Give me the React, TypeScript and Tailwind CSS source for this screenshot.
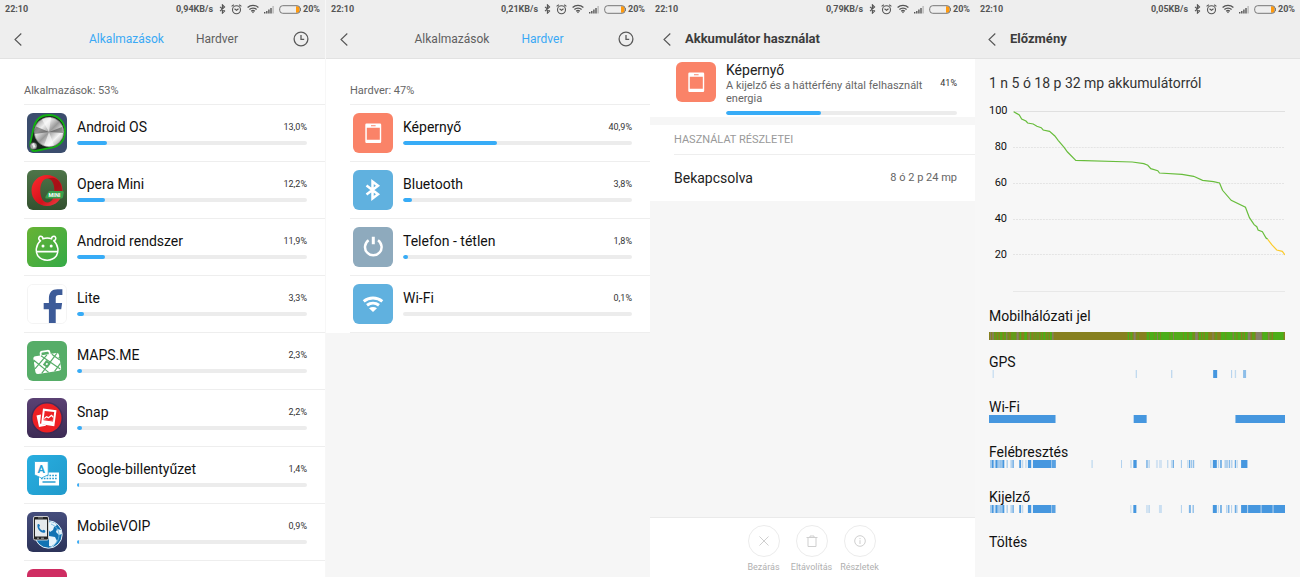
import React from "react";

type Range = [number, number, number?];

/* ---------- status bar ---------- */

function StatusBar({ speed }: { speed: string }) {
  return (
    <div className="flex h-[18px] items-center px-[5px] text-[9px] leading-3 font-bold text-[#555]">
      <span>22:10</span>
      <span className="ml-auto">{speed}</span>
      <svg className="ml-[6px] h-[10px] w-[7px]" viewBox="0 0 7 10" fill="none" stroke="currentColor" strokeWidth="1.1" aria-hidden="true">
        <path d="M1 2.8 5.6 7 3.4 9.2V.8L5.6 3 1 7.2" />
      </svg>
      <svg className="ml-[5px] h-[11px] w-[11px]" viewBox="0 0 11 11" fill="none" stroke="currentColor" aria-hidden="true">
        <circle cx="5.5" cy="5.8" r="4" strokeWidth="1.1" />
        <path d="M.6 2.4 2.8.8M10.4 2.4 8.2.8M3.5 4.7l2 1.6 2-1.6" strokeWidth="1.1" />
      </svg>
      <svg className="ml-[5px] h-[10px] w-[12px]" viewBox="0 0 12 10" fill="none" stroke="currentColor" strokeWidth="1.3" aria-hidden="true">
        <path d="M.6 3.5C3.6.7 8.4.7 11.4 3.5M2.4 5.5c2-1.9 5.2-1.9 7.2 0M4.2 7.3c1-1 2.6-1 3.6 0" />
        <path d="M4.7 7.7h2.6L6 9.3z" fill="currentColor" stroke="none" />
      </svg>
      <svg className="ml-[5px] h-[9px] w-[10px]" viewBox="0 0 10 9" fill="currentColor" aria-hidden="true">
        <path d="M0 7h1.4v1.5H0zM2.1 6h1.4v2.5H2.1zM4.2 4.6h1.4v3.9H4.2zM6.3 3h1.4v5.5H6.3z" />
        <path d="M8.4 1h1.4v7.5H8.4z" opacity=".35" />
      </svg>
      <svg className="ml-[5px] h-[9px] w-[22px]" viewBox="0 0 22 9" aria-hidden="true">
        <path d="M17 1.2h1.5a2 2 0 0 1 2 2v2.6a2 2 0 0 1-2 2H17z" fill="#ff9a0e" />
        <rect x=".7" y=".7" width="20.4" height="7.6" rx="3" fill="none" stroke="#777" strokeWidth="1" />
        <path d="M21.6 3v3" stroke="#777" />
      </svg>
      <span className="ml-[2px]">20%</span>
    </div>
  );
}

function BackButton() {
  return (
    <button type="button" aria-label="Vissza" className="flex h-6 w-4 shrink-0 items-center justify-center text-[#555]">
      <svg className="h-[13px] w-2" viewBox="0 0 8 13" fill="none" stroke="currentColor" strokeWidth="1.1" aria-hidden="true">
        <path d="M7.3.5 1 6.5l6.300 6" />
      </svg>
    </button>
  );
}

function TabHeader({ speed, active }: { speed: string; active: number }) {
  const on = "text-[#3aa9f5]";
  const off = "text-[#5f5f5f]";
  return (
    <header className="h-[59px] shrink-0 border-b border-[#e2e2e2] bg-[#eeeeee]">
      <StatusBar speed={speed} />
      <div className="flex h-10 items-center pt-[2px] pr-4 pl-[10px]">
        <BackButton />
        <nav className="flex flex-1 items-center justify-center gap-8 pl-2 text-[12px] leading-4">
          <a href="#apps" className={active === 0 ? on : off}>Alkalmazások</a>
          <a href="#hardware" className={active === 1 ? on : off}>Hardver</a>
        </nav>
        <button type="button" aria-label="Előzmény" className="text-[#5a5a5a]">
          <svg className="h-4 w-4" viewBox="0 0 16 16" fill="none" stroke="currentColor" strokeWidth="1.3" aria-hidden="true">
            <circle cx="8" cy="8" r="6.9" />
            <path d="M8 4v4.3h3.2" />
          </svg>
        </button>
      </div>
    </header>
  );
}

function TitleHeader({ speed, title }: { speed: string; title: string }) {
  return (
    <header className="h-[59px] shrink-0 border-b border-[#e2e2e2] bg-[#eeeeee]">
      <StatusBar speed={speed} />
      <div className="flex h-10 items-center gap-[10px] pt-[2px] pl-[9px]">
        <BackButton />
        <h1 className="text-[13px] leading-4 font-bold text-[#3c3c3c]">{title}</h1>
      </div>
    </header>
  );
}

/* ---------- app icons ---------- */

const tile = "h-10 w-10 shrink-0 rounded-[6px]";

function AndroidOsIcon() {
  return (
    <svg className={tile} viewBox="0 0 40 40" aria-hidden="true">
      <defs>
        <linearGradient id="knob" x1="0" y1="0" x2="1" y2="1">
          <stop offset="0" stopColor="#777" />
          <stop offset=".3" stopColor="#eee" />
          <stop offset=".5" stopColor="#9a9a9a" />
          <stop offset=".72" stopColor="#f4f4f4" />
          <stop offset="1" stopColor="#777" />
        </linearGradient>
      </defs>
      <rect width="40" height="40" fill="#3b4d6d" />
      <path d="M3.500 29 6.800 14C9 6 15 2 22 2c9 0 16 7 16 16 0 8-4 14-12 16.500L8 38c-3 .6-5.500-3-4.500-9z" fill="#17251c" stroke="#12b012" strokeWidth="1.800" />
      <circle cx="22" cy="19" r="14.800" fill="url(#knob)" stroke="#666" strokeWidth=".6" />
      <path d="M22 19 9 13.500A14 14 0 0 0 7.500 21zM22 19l13-5a14 14 0 0 1 1 6z" fill="#333" opacity=".5" />
      <path d="M22 19 15 6.500a14 14 0 0 1 9-2.200zM22 19l-5 13.500a14 14 0 0 0 10 0z" fill="#fff" opacity=".6" />
      <circle cx="6.500" cy="33" r="3.600" fill="#a2a6a4" stroke="#333" strokeWidth=".5" />
      <path d="m5 31 2-1 1.500 4-2 1z" fill="#eee" />
    </svg>
  );
}

function OperaIcon() {
  return (
    <svg className={tile} viewBox="0 0 40 40" aria-hidden="true">
      <defs>
        <linearGradient id="operaBg" x1="0" y1="0" x2="0" y2="1">
          <stop offset="0" stopColor="#4e7549" />
          <stop offset="1" stopColor="#33512f" />
        </linearGradient>
        <linearGradient id="operaO" x1="0" y1="0" x2="1" y2="1">
          <stop offset="0" stopColor="#ff2b2e" />
          <stop offset=".6" stopColor="#d3121c" />
          <stop offset="1" stopColor="#f4474a" />
        </linearGradient>
      </defs>
      <rect width="40" height="40" fill="url(#operaBg)" />
      <path fillRule="evenodd" d="M20 5c8.600 0 15.500 6.700 15.500 15.500S28.600 36 20 36 4.500 29.300 4.500 20.500 11.400 5 20 5zm.5 3.500c-4.500 0-7.200 5-7.200 12s2.700 12 7.200 12 7-5 7-12-2.500-12-7-12z" fill="url(#operaO)" />
      <path d="M20.500 8.500C30 5 35 13 35 21h-7.500c0-7-2.500-12.500-7-12.500z" fill="#8d1013" opacity=".65" />
      <path d="M21 22.500q.4-1.500 2-1.500h12.500q1.500 0 1.300 1.500L36 27q-.3 1.600-2 1.600H19.500q-1.500 0-1.200-1.500z" fill="#39a14b" />
      <text x="27.500" y="27" textAnchor="middle" fontSize="5.500" fontWeight="700" fill="#fff" fontFamily="Roboto, sans-serif">MINI</text>
    </svg>
  );
}

function AndroidSystemIcon() {
  return (
    <svg className={tile} viewBox="0 0 40 40" aria-hidden="true">
      <defs>
        <linearGradient id="androidBg" x1="0" y1="0" x2="1" y2="1">
          <stop offset="0" stopColor="#68b334" />
          <stop offset="1" stopColor="#34aa47" />
        </linearGradient>
      </defs>
      <rect width="40" height="40" fill="url(#androidBg)" />
      <g fill="none" stroke="#fff" strokeWidth="1.500">
        <path d="M14.200 13.500c-3 .5-3.300-4-.7-4.200 1.600-.1 2.300 1 2.500 2.500 2.500-1 6-1 8.500 0 .2-1.500 1-2.600 2.500-2.500 2.600.2 2.300 4.700-.7 4.200" />
        <path d="M13.700 13.500C8.500 18 8.300 25 11 29c4.500 5.500 14 5.500 18.200 0 2.700-4 2.500-11-2.700-15.500" />
        <path d="M9.500 24.600h21" strokeWidth="1.800" />
      </g>
      <circle cx="16" cy="19" r="1.500" fill="#fff" />
      <circle cx="24.200" cy="19" r="1.500" fill="#fff" />
    </svg>
  );
}

function LiteIcon() {
  return (
    <svg className={tile + " border border-[#f4f4f4]"} viewBox="0 0 40 40" aria-hidden="true">
      <rect width="40" height="40" fill="#fff" />
      <path d="M22 40.500V25.500h-5.500v-6.600H22V14c0-6 3.200-9.500 9-9.500h5.200v6h-3.700c-2.500 0-3.300 1.100-3.300 3.300v5.100h6.700l-.9 6.600h-5.800v15z" fill="#3d5b98" />
    </svg>
  );
}

function MapsIcon() {
  return (
    <svg className={tile} viewBox="0 0 40 40" aria-hidden="true">
      <rect width="40" height="40" fill="#56ad68" />
      <g transform="rotate(-9 20 21)">
        <path d="M15 14v-2.200Q15 10 17 10h5q2 0 2 1.800V14" fill="none" stroke="#fff" strokeWidth="1.800" />
        <path d="M9.500 13.500h21q2.500 0 2.500 2.500v1.500l-1.200 1 1.200 1V29q0 2.500-2.500 2.500h-21Q7 31.500 7 29v-9.500l1.200-1-1.200-1V16q0-2.500 2.500-2.500z" fill="#fff" />
        <path d="m7 26 14-12M13 31.500 31 14M26 31.500l7-7M7 17l13 14.500M15 14l17 16M26 14l7 7" stroke="#56ad68" strokeWidth="1.200" />
        <path d="m19.500 19 4 4-4 4-4-4z" fill="#56ad68" />
        <path d="m19.500 21.700 1.300 1.300-1.300 1.300-1.300-1.300z" fill="#fff" />
      </g>
    </svg>
  );
}

function SnapIcon() {
  return (
    <svg className={tile} viewBox="0 0 40 40" aria-hidden="true">
      <defs>
        <linearGradient id="snapBg" x1="0" y1="0" x2="0" y2="1">
          <stop offset="0" stopColor="#5a4173" />
          <stop offset="1" stopColor="#3c2b54" />
        </linearGradient>
      </defs>
      <rect width="40" height="40" fill="url(#snapBg)" />
      <circle cx="20" cy="20" r="16" fill="#3a2550" opacity=".6" />
      <circle cx="20" cy="20" r="14.500" fill="#ed2024" />
      <path d="m9.500 17.500 4.500-1-1 9 6 1.500-.3.800-6.700 1.200z" fill="#fff" />
      <path fillRule="evenodd" d="m16 10.500 13.500 1.800-2.200 16-13.200-2zm1.700 2.400-1.200 9.300 9.500 1.300 1.200-9.400z" fill="#fff" />
      <path d="m17.500 19.500 2-1.500 2 1 3-2.500 2 2-.6 4-8.900-1.100z" fill="#fff" />
      <path d="m17.500 21 2-1.500 2 1 3-2.200 1.600 1.700-.4 2.600-8.500-1z" fill="#ed2024" />
    </svg>
  );
}

function KeyboardIcon() {
  return (
    <svg className={tile} viewBox="0 0 40 40" aria-hidden="true">
      <defs>
        <linearGradient id="kbBg" x1="0" y1="0" x2="1" y2="1">
          <stop offset="0" stopColor="#28aee0" />
          <stop offset="1" stopColor="#219acb" />
        </linearGradient>
      </defs>
      <rect width="40" height="40" fill="url(#kbBg)" />
      <path d="M12 17.500h20v13H12z" fill="#fff" />
      <path d="M14 20.500h16M14 23.500h16" stroke="#2a9fd2" strokeWidth="1.500" strokeDasharray="1.700 1.100" />
      <path d="M15.500 27h13" stroke="#2a9fd2" strokeWidth="1.600" />
      <path d="M7.500 6.500h13.700v13.300L14.400 23l-6.900-3.200z" fill="#fff" stroke="#2aa6d9" strokeWidth=".8" />
      <text x="14.300" y="18" textAnchor="middle" fontSize="11" fontWeight="700" fill="#279fd4" fontFamily="Roboto, sans-serif">A</text>
    </svg>
  );
}

function VoipIcon() {
  return (
    <svg className={tile} viewBox="0 0 40 40" aria-hidden="true">
      <defs>
        <linearGradient id="voipBg" x1="0" y1="0" x2="0" y2="1">
          <stop offset="0" stopColor="#454d7c" />
          <stop offset="1" stopColor="#2c3359" />
        </linearGradient>
      </defs>
      <rect width="40" height="40" fill="url(#voipBg)" />
      <circle cx="21.500" cy="22.500" r="13.700" fill="#1273b3" stroke="#e9f3fa" strokeWidth="1" />
      <path d="M20 11c4-2 8-.5 10 2l-3 2-1 3-3 2-2-3zM22 24l6 1 2 4-4 6-4-1zM30 17l4 1 1 4-3 1-3-3z" fill="#e6f3fa" />
      <path d="M24 12c5 2 8 6 8 11s-3 9-7 11" fill="none" stroke="#70b8df" strokeWidth=".9" />
      <rect x="6.500" y="4.500" width="15" height="23.500" rx="1.500" fill="#222" stroke="#ddd" strokeWidth=".9" />
      <rect x="8" y="7.500" width="12" height="17" fill="#e5e9ec" />
      <path d="M11 5.900h5" stroke="#999" strokeWidth=".8" />
      <path d="M10 26.200h2m2 0h3" stroke="#bbb" strokeWidth=".9" />
      <path d="M10.500 12.500c.5-1 2-.8 2.500 1l-.8 1.500c.5 2 1.800 3 3.300 3.500l1.300-.8c1.500.4 2 1.500 1.200 2.800-4 1.500-8.500-4-7.500-8z" fill="#1877bb" />
    </svg>
  );
}

function PinkIcon() {
  return (
    <svg className={tile} viewBox="0 0 40 40" aria-hidden="true">
      <rect width="40" height="40" fill="#cf2d62" />
    </svg>
  );
}

function ScreenIcon() {
  return (
    <svg className={tile} viewBox="0 0 40 40" aria-hidden="true">
      <rect width="40" height="40" fill="#fa8368" />
      <path fillRule="evenodd" d="M13.500 10.500h13.500q1.200 0 1.200 1.200v17q0 1.200-1.200 1.200h-13.500q-1.200 0-1.200-1.200v-17q0-1.200 1.200-1.200zm.3 4.200v12h13v-12zm4.200-2.500v1h4.600v-1z" fill="#fff" />
    </svg>
  );
}

function BluetoothIcon() {
  return (
    <svg className={tile} viewBox="0 0 40 40" aria-hidden="true">
      <rect width="40" height="40" fill="#60b1df" />
      <path d="m13.500 15.500 11.500 8.700-5.500 4.300v-17l5.500 4.300-11.500 8.700" fill="none" stroke="#fff" strokeWidth="2.500" />
    </svg>
  );
}

function PowerIcon() {
  return (
    <svg className={tile} viewBox="0 0 40 40" aria-hidden="true">
      <rect width="40" height="40" fill="#8eaabd" />
      <path d="M15.600 13.200a8.300 8.300 0 1 0 9.400 0" fill="none" stroke="#fff" strokeWidth="2.500" />
      <path d="M20.300 9.800v7.400" stroke="#fff" strokeWidth="3" />
    </svg>
  );
}

function WifiIcon() {
  return (
    <svg className={tile} viewBox="0 0 40 40" aria-hidden="true">
      <rect width="40" height="40" fill="#60b1df" />
      <path d="M10.700 17.300c5.300-4.300 13.300-4.300 18.600 0M14 21.300c3.500-2.700 8.500-2.700 12 0" fill="none" stroke="#fff" strokeWidth="3" />
      <path d="M16 24.200c2.500-1.500 5.500-1.500 8 0L20 28z" fill="#fff" />
    </svg>
  );
}

/* ---------- usage lists ---------- */

function Meter({ value, label }: { value: number; label: string }) {
  return (
    <div role="progressbar" aria-label={label} aria-valuenow={value} className="h-1 overflow-hidden rounded-full bg-[#ececec]">
      <div className="h-1 rounded-full bg-[#37acf7]" style={{ width: `${value}%` }} />
    </div>
  );
}

type Item = { name: string; percent: string; bar: number; icon: React.ReactNode };

const apps: Item[] = [
  { name: "Android OS", percent: "13,0%", bar: 13, icon: <AndroidOsIcon /> },
  { name: "Opera Mini", percent: "12,2%", bar: 12, icon: <OperaIcon /> },
  { name: "Android rendszer", percent: "11,9%", bar: 12, icon: <AndroidSystemIcon /> },
  { name: "Lite", percent: "3,3%", bar: 3, icon: <LiteIcon /> },
  { name: "MAPS.ME", percent: "2,3%", bar: 2, icon: <MapsIcon /> },
  { name: "Snap", percent: "2,2%", bar: 2, icon: <SnapIcon /> },
  { name: "Google-billentyűzet", percent: "1,4%", bar: 1, icon: <KeyboardIcon /> },
  { name: "MobileVOIP", percent: "0,9%", bar: 1, icon: <VoipIcon /> },
  { name: "", percent: "", bar: 0, icon: <PinkIcon /> },
];

const hardware: Item[] = [
  { name: "Képernyő", percent: "40,9%", bar: 41, icon: <ScreenIcon /> },
  { name: "Bluetooth", percent: "3,8%", bar: 4, icon: <BluetoothIcon /> },
  { name: "Telefon - tétlen", percent: "1,8%", bar: 2, icon: <PowerIcon /> },
  { name: "Wi-Fi", percent: "0,1%", bar: 0, icon: <WifiIcon /> },
];

function UsageList({ title, items }: { title: string; items: Item[] }) {
  return (
    <section className="bg-white pl-6">
      <h2 className="pt-6 pb-[5px] text-[11px] leading-4 text-[#666]">{title}</h2>
      <ul className="border-b border-[#eeeeee]">
        {items.map((item, i) => (
          <li key={i} className="flex h-[57px] items-center gap-[10px] border-t border-[#eeeeee] pr-[18px] pl-[3px]">
            {item.icon}
            {item.name && (
              <div className="flex-1 pb-[2px]">
                <div className="mb-[6px] flex items-center justify-between">
                  <span className="text-[14px] leading-4 text-[#111]">{item.name}</span>
                  <span className="text-[9px] leading-4 text-[#333]">{item.percent}</span>
                </div>
                <Meter value={item.bar} label={item.name} />
              </div>
            )}
          </li>
        ))}
      </ul>
    </section>
  );
}

/* ---------- battery detail ---------- */

function ActionButton({ label, children }: { label: string; children: React.ReactNode }) {
  return (
    <button type="button" disabled className="flex w-12 flex-col items-center gap-1 text-[9px] leading-3 text-[#b0b0b0]">
      <span className="flex h-8 w-8 items-center justify-center rounded-full border border-[#ececec] text-[#cfcfcf]">
        <svg className="h-3 w-3" viewBox="0 0 12 12" fill="none" stroke="currentColor" strokeWidth="1" aria-hidden="true">
          {children}
        </svg>
      </span>
      {label}
    </button>
  );
}

function BatteryDetail() {
  return (
    <>
      <section className="flex gap-[10px] bg-white pt-[3px] pr-[18px] pb-[2px] pl-[26px]">
        <ScreenIcon />
        <div className="flex-1">
          <div className="flex justify-between">
            <div className="max-w-[205px]">
              <h2 className="text-[14px] leading-4 text-[#222]">Képernyő</h2>
              <p className="pt-px text-[11px] leading-[13px] text-[#666]">A kijelző és a háttérfény által felhasznált energia</p>
            </div>
            <span className="pt-[13px] text-[9px] leading-4 text-[#333]">41%</span>
          </div>
          <div className="pt-[6px]">
            <Meter value={41} label="Képernyő" />
          </div>
        </div>
      </section>
      <section className="mt-2 bg-white pl-6">
        <h2 className="border-b border-[#eeeeee] pt-[7px] pb-[6px] text-[11px] leading-4 text-[#999]">HASZNÁLAT RÉSZLETEI</h2>
        <div className="flex h-[46px] items-center justify-between pr-[18px]">
          <span className="text-[14px] leading-4 text-[#222]">Bekapcsolva</span>
          <span className="text-[11px] leading-4 text-[#666]">8 ó 2 p 24 mp</span>
        </div>
      </section>
      <footer className="mt-auto flex justify-center border-t border-[#eaeaea] bg-white pt-[7px] pr-[2px] pb-[4px]">
        <ActionButton label="Bezárás">
          <path d="m1.500 1.500 9 9M10.500 1.500l-9 9" />
        </ActionButton>
        <ActionButton label="Eltávolítás">
          <path d="M.5 2.500h11M2 2.500v9h8v-9M4 2.500V1h4v1.500" />
        </ActionButton>
        <ActionButton label="Részletek">
          <circle cx="6" cy="6" r="5.300" />
          <path d="M6 5.200V9M6 3v1.200" />
        </ActionButton>
      </footer>
    </>
  );
}

/* ---------- history ---------- */

function Track({ ranges, color = "#4697df" }: { ranges: Range[]; color?: string }) {
  return (
    <svg className="block h-2 w-full" viewBox="0 0 890 8" preserveAspectRatio="none" aria-hidden="true">
      {ranges.map(([x, w, o], i) => (
        <rect key={i} x={x} y="0" width={w} height="8" fill={color} opacity={o ?? 1} />
      ))}
    </svg>
  );
}

const signalGreen: Range[] = [
  [16, 3], [24, 4, 0.7], [33, 8, 0.8], [46, 4], [56, 3, 0.6], [66, 16, 0.6], [92, 5], [106, 8], [124, 3], [134, 5, 0.6],
  [142, 9, 0.5], [155, 5, 0.8], [163, 7], [174, 5, 0.7], [183, 6], [417, 4], [425, 6, 0.8], [447, 3, 0.6], [474, 8], [484, 12],
  [498, 8], [509, 6], [517, 26], [545, 8], [556, 28, 0.9], [586, 10], [600, 12], [615, 4, 0.6], [631, 6], [640, 5, 0.8],
  [649, 10, 0.8], [681, 5, 0.7], [697, 14], [713, 20], [736, 8, 0.9], [747, 10], [762, 4], [770, 8], [791, 8, 0.7],
  [822, 16], [844, 6, 0.7], [854, 32],
];
const signalGrey: Range[] = [
  [3, 3, 0.8], [10, 4], [52, 3], [83, 6], [119, 3], [190, 4], [435, 6], [505, 2], [554, 2], [620, 8], [672, 3], [733, 2], [778, 8], [802, 18], [840, 3],
];
const gps: Range[] = [[11, 3, 0.35], [441, 4, 0.3], [548, 3, 0.4], [674, 12], [728, 3, 0.4], [739, 4, 0.3], [764, 9, 0.6]];
const wifi: Range[] = [[0, 200], [435, 39], [741, 149]];
const early: Range[] = [
  [4, 3, 0.7], [8, 6], [17, 4, 0.6], [21, 5], [28, 4, 0.7], [34, 4, 0.8], [40, 6], [53, 3, 0.6], [65, 3, 0.6], [70, 5, 0.7], [91, 5], [98, 5, 0.3],
];
const wake: Range[] = [
  ...early, [109, 4, 0.3], [117, 10], [132, 55], [188, 13, 0.9], [308, 4, 0.3], [397, 3, 0.4], [425, 4, 0.3], [434, 10], [473, 4, 0.8], [479, 5, 0.3],
  [502, 6, 0.2], [511, 9, 0.2], [536, 3, 0.4], [547, 3, 0.3], [552, 4, 0.8], [577, 3, 0.5], [596, 3, 0.3], [601, 4, 0.8], [607, 4, 0.5], [613, 4, 0.6],
  [665, 4, 0.3], [673, 12], [688, 4, 0.3], [695, 5, 0.8], [708, 12, 0.4], [722, 3, 0.7], [728, 4, 0.4], [739, 4, 0.8], [745, 3, 0.3], [758, 19],
];
const display: Range[] = [
  ...early, [117, 10], [132, 55], [188, 12, 0.9], [425, 3, 0.3], [434, 9], [473, 4, 0.3], [479, 5, 0.3], [511, 9, 0.25], [577, 3, 0.4], [601, 6, 0.7],
  [612, 4, 0.6], [673, 12], [688, 3, 0.3], [695, 5, 0.8], [713, 3, 0.4], [718, 5, 0.7], [728, 3, 0.4], [739, 5, 0.8], [745, 3, 0.3],
  [758, 19], [779, 38], [819, 34], [855, 35],
];

const rows: { label: string; ranges: Range[] }[] = [
  { label: "GPS", ranges: gps },
  { label: "Wi-Fi", ranges: wifi },
  { label: "Felébresztés", ranges: wake },
  { label: "Kijelző", ranges: display },
  { label: "Töltés", ranges: [] },
];

function History() {
  return (
    <section className="pt-4 pr-[15px] pl-[14px] text-[14px] leading-4 text-[#111]">
      <h2 className="text-[#333]">1 n 5 ó 18 p 32 mp akkumulátorról</h2>
      <div className="flex gap-[6px] pt-3">
        <div className="flex w-[18px] flex-col gap-5 text-right text-[11px] leading-4">
          {[100, 80, 60, 40, 20].map((n) => (
            <span key={n}>{n}</span>
          ))}
        </div>
        <svg className="mt-2 h-[181px] min-w-0 flex-1" viewBox="0 0 273 181" preserveAspectRatio="none" fill="none" aria-hidden="true">
          <path d="M0 .5h273" stroke="#e0e0e0" />
          <path d="M0 180.500h273" stroke="#e8e8e8" />
          <path d="M0 36.500h273M0 72.500h273M0 108.500h273M0 143.500h273" stroke="#e4e4e4" strokeDasharray="2 1" />
          <path
            d="M.7.7 6.300 4l2.400 4 4.300 2 1.700 2 5.600 1 3.700 2.300 4.300 1.400 2 2.300 6.400 1.300L42 25l3.300 4.300 6 7L54.700 41 63 49.300l56.700 1.700 11.600 1.700 4 1.600 3 3.400 7 2L147 62l22.700 1.300 11.600 2 9 4 11 1.400 6 1.300 3 7.300 8.700 10 14.300 7 4 10.400 4.700 7 2.700 2 1.300 3.300 4.300 1.700 3.700 6.300 1.700 1.300"
            stroke="#68bd3c"
            strokeWidth="1.200"
          />
          <path d="m255.700 128.300 4 5.400 5 5.300 5.600 1.300 2.700 3.700" stroke="#fccb2c" strokeWidth="1.200" />
        </svg>
      </div>
      <h3 className="pt-4">Mobilhálózati jel</h3>
      <div className="relative mt-2 bg-[#87801f]">
        <Track ranges={signalGreen} color="#4cae19" />
        <div className="absolute inset-0">
          <Track ranges={signalGrey} color="#86806a" />
        </div>
      </div>
      <ul className="pt-[14px]">
        {rows.map((row) => (
          <li key={row.label} className="h-[45px]">
            <h3>{row.label}</h3>
            <Track ranges={row.ranges} />
          </li>
        ))}
      </ul>
    </section>
  );
}

const panel = "flex min-w-0 flex-col overflow-hidden";

export default function App() {
  return (
    <main className="grid h-screen grid-cols-4 bg-white pb-[3px] font-['Roboto',sans-serif]">
      <div className={panel + " bg-white"}>
        <TabHeader speed="0,94KB/s" active={0} />
        <UsageList title="Alkalmazások: 53%" items={apps} />
      </div>
      <div className={panel + " border-l border-[#f7f7f7] bg-[#f6f6f6]"}>
        <TabHeader speed="0,21KB/s" active={1} />
        <UsageList title="Hardver: 47%" items={hardware} />
      </div>
      <div className={panel + " bg-[#f6f6f6]"}>
        <TitleHeader speed="0,79KB/s" title="Akkumulátor használat" />
        <BatteryDetail />
      </div>
      <div className={panel + " bg-[#f7f7f7]"}>
        <TitleHeader speed="0,05KB/s" title="Előzmény" />
        <History />
      </div>
    </main>
  );
}
